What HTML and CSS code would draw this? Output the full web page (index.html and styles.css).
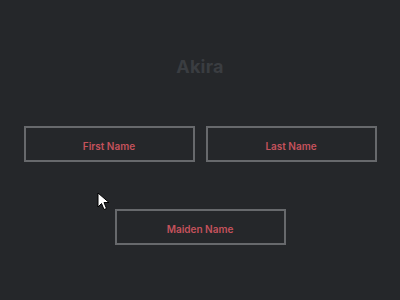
FILE: index.html
```html
<!DOCTYPE html>
<html>
<head>
<meta charset="utf-8">
<link rel="stylesheet" href="styles.css">
</head>
<body>
<main class="page">
  <h1 class="title">Akira</h1>
  <div class="row">
    <div class="field">First Name</div>
    <div class="field">Last Name</div>
  </div>
  <div class="row single">
    <div class="field">Maiden Name</div>
  </div>
</main>
<svg class="cursor" width="14" height="20" viewBox="0 0 14 20">
  <path d="M1 1 L1 15 L4.5 11.5 L7 17.5 L9.5 16.5 L7 10.5 L12 10.5 Z" fill="#ffffff" stroke="#000000" stroke-width="1" stroke-linejoin="round"/>
</svg>
</body>
</html>
```
FILE: styles.css
```css
html, body {
  margin: 0;
  padding: 0;
  background: #25272a;
  width: 400px;
  height: 300px;
  overflow: hidden;
  font-family: Inter, "Noto Sans", sans-serif;
}
.page {
  display: flex;
  flex-direction: column;
  align-items: center;
  padding-top: 56px;
}
.title {
  margin: 0;
  font-size: 18px;
  line-height: 22px;
  font-weight: 700;
  color: #3a3d41;
  letter-spacing: 0.2px;
}
.row {
  display: flex;
  gap: 11px;
  margin-top: 48px;
}
.row.single {
  margin-top: 47px;
}
.field {
  box-sizing: border-box;
  width: 171px;
  height: 36px;
  padding-top: 3px;
  border: 2px solid #67696c;
  display: flex;
  align-items: center;
  justify-content: center;
  color: #c4525c;
  font-size: 10px;
  font-weight: 600;
}
.cursor {
  position: absolute;
  left: 97px;
  top: 192px;
}
```
